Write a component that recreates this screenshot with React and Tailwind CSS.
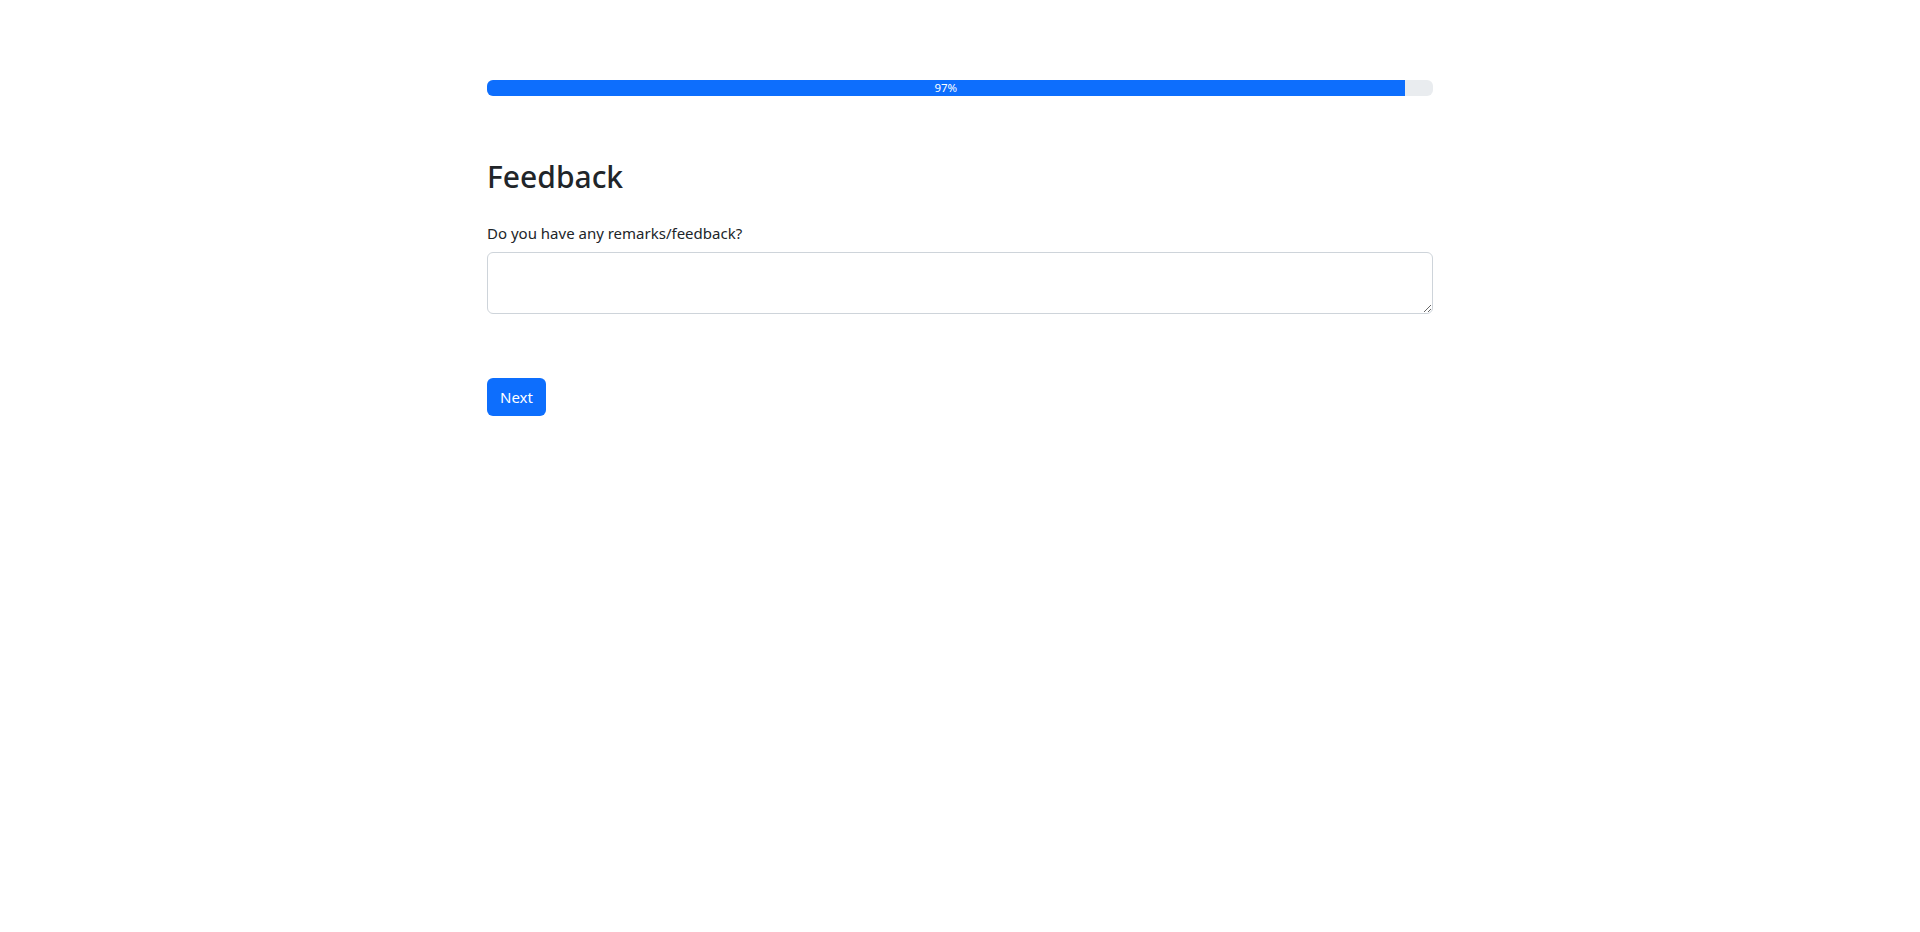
export default function App() {
  return (
    <div className="min-h-[932px] bg-white text-[#212529]" style={{ fontFamily: '"Noto Sans", "Open Sans", sans-serif' }}>
      <div className="w-[946px] mx-auto pt-[80px]">
        <div className="flex h-[16px] w-full rounded-[6px] bg-[#e9ecef] overflow-hidden">
          <div className="w-[97%] bg-[#0d6efd] text-white text-[11.5px] leading-[16px] flex items-center justify-center">97%</div>
        </div>
        <h2 className="mt-[62px] text-[30px] leading-[38px] font-medium">Feedback</h2>
        <div className="mt-[25px]">
          <label className="block text-[15px] leading-[24px] mb-[7px]">Do you have any remarks/feedback?</label>
          <textarea rows={2} className="block w-full h-[62px] border border-[#ced4da] rounded-[6px] px-3 py-1.5 text-[15px] leading-[24px] resize-y outline-none" />
        </div>
        <button className="mt-[64px] h-[38px] w-[59px] bg-[#0d6efd] text-white text-[15px] leading-[24px] rounded-[6px]">Next</button>
      </div>
    </div>
  );
}
